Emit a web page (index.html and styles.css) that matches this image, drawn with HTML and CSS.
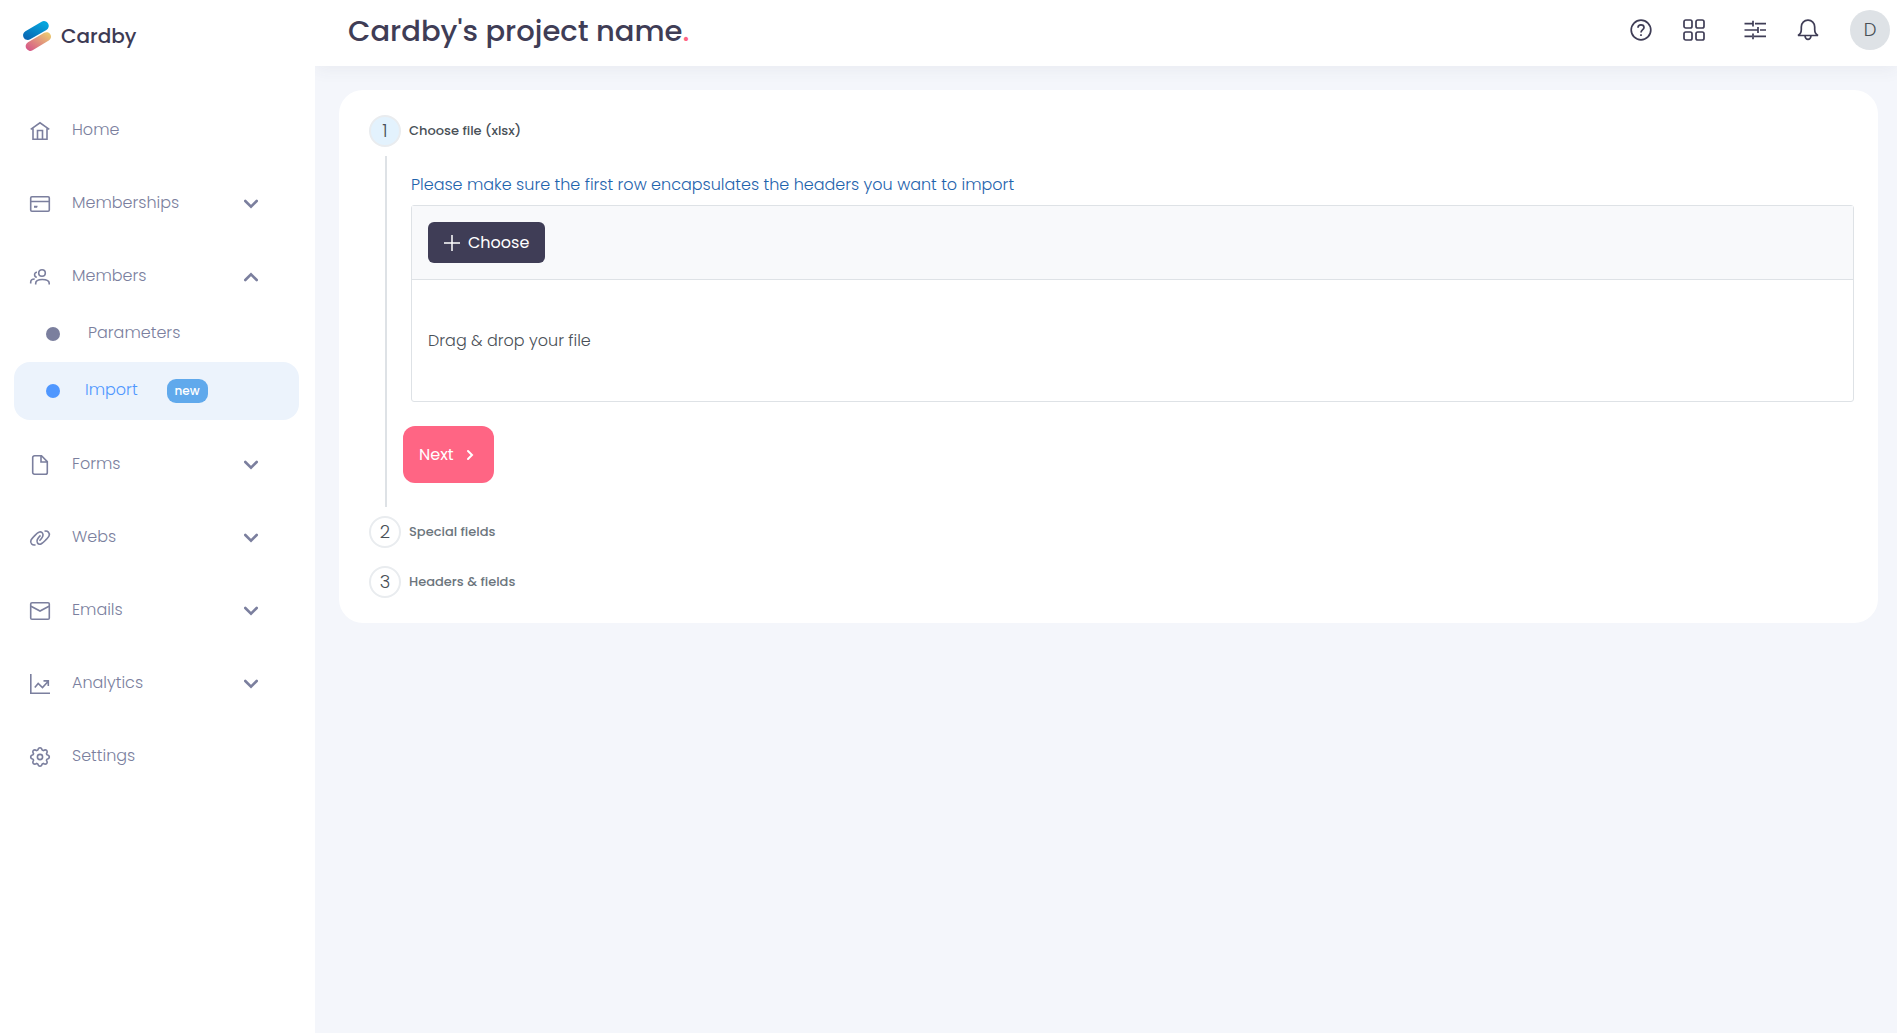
FILE: index.html
```html
<!DOCTYPE html>
<html lang="en">
<head>
<meta charset="utf-8">
<meta name="viewport" content="width=device-width, initial-scale=1">
<title>Cardby - Import members</title>
<link rel="stylesheet" href="styles.css">
</head>
<body>
<svg class="sprite" aria-hidden="true">
  <symbol id="chevron" viewBox="0 0 14 10"><path d="M1.3 2l5.7 5.6L12.700 2" fill="none" stroke="currentColor" stroke-width="2.600" stroke-linecap="round"/></symbol>
</svg>
<div class="app">
  <aside class="sidebar">
    <a class="brand" href="#">
      <svg width="30" height="32" viewBox="0 0 30 32" aria-hidden="true">
        <defs>
          <linearGradient id="blue" x1="0" y1="1" x2=".6" y2="0"><stop offset="0" stop-color="#0a5fae"/><stop offset="1" stop-color="#05a5dd"/></linearGradient>
          <linearGradient id="warm" x1="0" y1="1" x2="1" y2="0"><stop offset=".1" stop-color="#d75b87"/><stop offset=".9" stop-color="#eac673"/></linearGradient>
        </defs>
        <path d="M3.400 11.200L19.600 1.700a4.700 4.700 0 0 1 4.800 8.200L8.200 19.300a4.700 4.700 0 0 1-4.800-8.100z" fill="url(#blue)"/>
        <path d="M6 22.300L22.200 12.800a4.400 4.400 0 0 1 4.600 7.800L10.600 30.300A4.600 4.600 0 0 1 6 22.300z" fill="url(#warm)"/>
      </svg>
      <span>Cardby</span>
    </a>
    <nav aria-label="Main">
      <ul class="menu">
        <li><a class="item" href="#">
          <svg class="icon" viewBox="0 0 20 20"><path d="M.7 8.400L10 1.800l9.300 6.600M3 7.500v10.800h14V7.500M7.500 18V9.500h5V18"/></svg>
          <span class="label">Home</span></a></li>
        <li><button class="item" type="button" aria-expanded="false">
          <svg class="icon" viewBox="0 0 20 20"><rect x=".7" y="2.700" width="18.600" height="14.600" rx="1.200"/><path d="M1 7.500h18M4 12.500h3.500" /><path d="M4 12.900h3"/></svg>
          <span class="label">Memberships</span><svg class="chevron"><use href="#chevron"/></svg></button></li>
        <li><button class="item" type="button" aria-expanded="true">
          <svg class="icon" viewBox="0 0 20 20"><circle cx="12" cy="6" r="3.300"/><path d="M5.700 17.500v-1.300c0-2.400 2.300-3.700 6.600-3.700s6.900 1.300 6.900 3.700v1.300M7 5.200a2.300 2.300 0 0 0-2.400 2.600c0 1.300.9 2.300 2.200 2.500M.7 16.500v-1.300c0-2 1.500-3.200 4-3.200"/></svg>
          <span class="label">Members</span><svg class="chevron up"><use href="#chevron"/></svg></button>
          <ul class="submenu">
            <li><a class="item" href="#"><span class="dot"></span><span class="label">Parameters</span></a></li>
            <li><a class="item active" href="#" aria-current="page"><span class="dot"></span><span class="label">Import</span><span class="badge">new</span></a></li>
          </ul></li>
        <li><button class="item" type="button" aria-expanded="false">
          <svg class="icon" viewBox="0 0 20 20"><path d="M11.500.8H4.500a1.800 1.800 0 0 0-1.800 1.800v14.800a1.800 1.800 0 0 0 1.800 1.800h11a1.800 1.800 0 0 0 1.800-1.800V6.600zM11 1v6h6"/></svg>
          <span class="label">Forms</span><svg class="chevron"><use href="#chevron"/></svg></button></li>
        <li><button class="item" type="button" aria-expanded="false">
          <svg class="icon" viewBox="0 0 20 20"><path d="M5.500 16.800c-3 1-5.800-1.600-4.500-4.700.4-1 1.400-2 2.700-3.400C5.700 6.600 7.400 4.500 9.500 4c2.800-.6 4.200 2 3.200 4.500-.7 1.700-2 3-3.200 4.200M14.500 3.300c3-1 5.800 1.600 4.500 4.700-.4 1-1.400 2-2.700 3.400-2 2.100-3.700 4.200-5.800 4.700-2.800.6-4.200-2-3.200-4.500.7-1.700 2-3 3.200-4.200"/></svg>
          <span class="label">Webs</span><svg class="chevron"><use href="#chevron"/></svg></button></li>
        <li><button class="item" type="button" aria-expanded="false">
          <svg class="icon" viewBox="0 0 20 20"><rect x=".7" y="1.700" width="18.600" height="16.600" rx="1.300"/><path d="M1 5.200L10 10l9-4.800"/></svg>
          <span class="label">Emails</span><svg class="chevron"><use href="#chevron"/></svg></button></li>
        <li><button class="item" type="button" aria-expanded="false">
          <svg class="icon" viewBox="0 0 20 20"><path d="M.8 0v19.200H20M4.800 13.500l3.400-4 4.300 4 5.500-6M13.500 6.900h4.800v5"/></svg>
          <span class="label">Analytics</span><svg class="chevron"><use href="#chevron"/></svg></button></li>
        <li><a class="item" href="#">
          <svg class="icon" viewBox="-10 -10 20 20"><circle r="2.600"/><path d="M-2.200-6.900Q-1.700-9.300 0-9.300T2.200-6.900L3.320-6.430Q5.370-7.780 6.580-6.580T6.430-3.320L6.900-2.200Q9.300-1.700 9.300 0T6.900 2.200L6.430 3.320Q7.780 5.370 6.580 6.580T3.320 6.430L2.200 6.900Q1.700 9.300 0 9.300T-2.200 6.900L-3.320 6.430Q-5.370 7.780-6.580 6.580T-6.430 3.320L-6.900 2.200Q-9.300 1.700-9.300 0T-6.900-2.200L-6.430-3.320Q-7.780-5.370-6.580-6.580T-3.320-6.430z" stroke-linejoin="round"/></svg>
          <span class="label">Settings</span></a></li>
      </ul>
    </nav>
  </aside>
  <div class="page">
    <header class="topbar">
      <h1>Cardby's project name<span>.</span></h1>
      <div class="tools">
        <button type="button" aria-label="Help"><svg viewBox="0 0 22 22"><circle cx="11" cy="11" r="9.800"/><path d="M8 8.700C8 6.900 9.300 5.900 11 5.900s3 1.100 3 2.600c0 2.100-3 2.300-3 5"/><path d="M11 15.200v1.700"/></svg></button>
        <button type="button" aria-label="Apps"><svg viewBox="0 0 22 22"><rect x="1" y="1" width="8" height="8" rx="1.800"/><rect x="13" y="1" width="8" height="8" rx="1.800"/><rect x="1" y="13" width="8" height="8" rx="1.800"/><rect x="13" y="13" width="8" height="8" rx="1.800"/></svg></button>
        <button class="sliders" type="button" aria-label="Filters"><svg viewBox="0 0 22 22"><path d="M.5 4.700H9M11 4.700h11M9 1.800v5.800M.5 11H14M16 11h6M14 8v6M.5 17.300H8M10 17.300h12M9 14.400v5.800"/></svg></button>
        <button type="button" aria-label="Notifications"><svg viewBox="0 0 22 22"><path d="M1 16.500h20c-2.200-1.200-3.300-3-3.300-6V8A6.600 6.600 0 0 0 11 1.200 6.600 6.600 0 0 0 4.300 8v2.500c0 3-1.100 4.800-3.300 6zM8 17c.3 2.300 1.500 3.400 3 3.400s2.700-1.100 3-3.400"/></svg></button>
        <button class="avatar" type="button" aria-label="Account">D</button>
      </div>
    </header>
    <main>
      <section class="card">
        <ol class="steps">
          <li class="step current">
            <div class="step-head"><span class="number">1</span><h2>Choose file (xlsx)</h2></div>
            <div class="step-body">
              <label class="hint" for="file">Please make sure the first row encapsulates the headers you want to import</label>
              <div class="uploader">
                <div class="upload-bar">
                  <button class="choose" id="file" type="button"><svg width="16" height="16" viewBox="0 0 16 16" aria-hidden="true"><path d="M8 0v16M0 8h16" stroke="currentColor" stroke-width="1.500"/></svg>Choose</button>
                </div>
                <p class="drop">Drag &amp; drop your file</p>
              </div>
              <button class="next" type="button">Next<svg width="8" height="12" viewBox="0 0 8 12" aria-hidden="true"><path d="M2 2l4 4-4 4" fill="none" stroke="currentColor" stroke-width="2" stroke-linecap="round"/></svg></button>
            </div>
          </li>
          <li class="step"><div class="step-head"><span class="number">2</span><h2>Special fields</h2></div></li>
          <li class="step"><div class="step-head"><span class="number">3</span><h2>Headers &amp; fields</h2></div></li>
        </ol>
      </section>
    </main>
  </div>
</div>
</body>
</html>
```
FILE: styles.css
```css
* { box-sizing: border-box; }
body {
  margin: 0;
  background: #f4f6fb;
  color: #495057;
  font: 300 16px/24px Poppins, Inter, sans-serif;
}
h1, h2, p, ul, ol { margin: 0; padding: 0; }
ul, ol { list-style: none; }
button { border: 0; background: none; color: inherit; font: inherit; padding: 0; cursor: pointer; }
a { color: inherit; text-decoration: none; }
.sprite { display: none; }

.app { display: flex; min-height: 100vh; }
.sidebar { position: relative; z-index: 1; flex: 0 0 315px; background: #fff; padding: 20px 16px 24px 14px; }
.brand {
  display: flex;
  align-items: center;
  gap: 9px;
  height: 32px;
  margin-bottom: 50px;
  padding-left: 8px;
  color: #3d3b54;
  font-size: 20px;
  font-weight: 500;
}

.menu { display: flex; flex-direction: column; gap: 16px; }
.item {
  display: flex;
  align-items: center;
  width: 100%;
  height: 57px;
  padding: 0 40px 0 16px;
  border-radius: 16px;
  color: #7b7f9e;
  text-align: left;
}
.icon { width: 20px; height: 20px; margin-right: 22px; fill: none; stroke: currentColor; stroke-width: 1.600; overflow: visible; }
.label { padding-bottom: 2px; }
.chevron { width: 16px; height: 10px; margin-left: auto; }
.chevron.up { transform: rotate(180deg); }
.submenu .item { padding-left: 32px; }
.dot { width: 14px; height: 14px; margin-right: 28px; border-radius: 50%; background: currentColor; }
.submenu .active { height: 58px; background: #ecf3fc; color: #4f97ff; }
.active .dot { margin-right: 25px; }
.badge {
  margin-left: 29px;
  padding: 0 8px;
  border-radius: 9px;
  background: #60a9ec;
  color: #fff;
  font-size: 12px;
  font-weight: 500;
}

.page { flex: 1; min-width: 0; }
.topbar {
  display: flex;
  align-items: center;
  justify-content: space-between;
  height: 66px;
  padding: 0 7px 6px 33px;
  background: #fff;
  box-shadow: 0 4px 16px rgba(60, 60, 90, .06);
}
h1 { padding-top: 2px; color: #3f3d56; font-size: 29px; font-weight: 500; line-height: 40px; }
h1 span { color: #ff6584; }
.tools { display: flex; align-items: center; gap: 31px; color: #3f3d56; }
.tools svg { display: block; width: 22px; height: 22px; fill: none; stroke: currentColor; stroke-width: 1.700; }
.sliders { margin-left: 8px; }
.avatar { width: 40px; height: 40px; border-radius: 50%; background: #dee2e6; color: #495057; font-size: 18px; }

main { padding: 24px 19px 24px 24px; }
.card { padding: 25px 24px 25px 30px; border-radius: 24px; background: #fff; }
.steps { display: flex; flex-direction: column; gap: 18px; }
.step.current { margin-bottom: -9px; }
.step-head { display: flex; align-items: center; gap: 8px; }
.number {
  width: 32px;
  height: 32px;
  border: 2px solid #e9ecef;
  border-radius: 50%;
  font-size: 18px;
  line-height: 28px;
  text-align: center;
}
.current .number { background: #e3f2fd; }
h2 { color: #6c757d; font-size: 13px; font-weight: 500; line-height: 24px; }
.current h2 { color: #495057; }
.step-body { margin: 9px 0 0 16px; padding: 17px 0 24px 24px; border-left: 2px solid #dee2e6; }
.hint { display: block; margin-bottom: 8px; color: #1f64ad; }
.uploader { border: 1px solid #dee2e6; border-radius: 3px; }
.upload-bar { padding: 16px; border-bottom: 1px solid #dee2e6; background: #f8f9fb; }
.choose {
  display: flex;
  align-items: center;
  gap: 8px;
  height: 41px;
  padding: 0 16px;
  border-radius: 6px;
  background: #3f3d56;
  color: #fff;
  font-weight: 400;
}
.drop { padding: 49px 16px 48px; }
.next {
  display: flex;
  align-items: center;
  gap: 12px;
  height: 57px;
  margin: 24px 0 0 -8px;
  padding: 0 20px 0 16px;
  border-radius: 12px;
  background: #ff6584;
  color: #fff;
  font-weight: 400;
}
```
